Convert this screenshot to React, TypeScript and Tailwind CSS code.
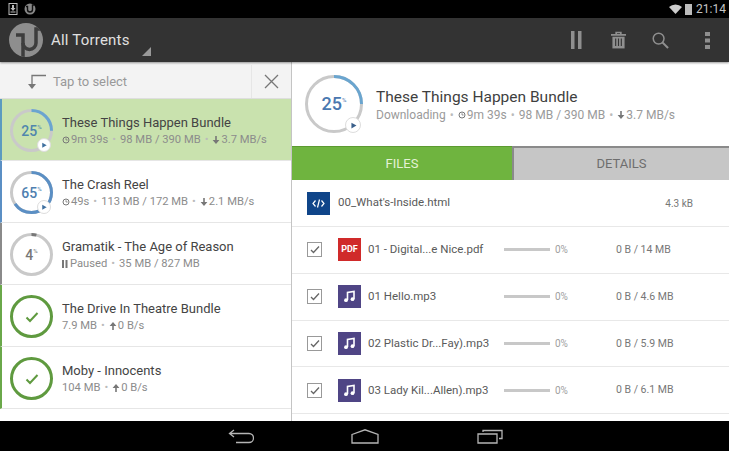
import React from "react";

const F = { fontFamily: "Roboto, 'Liberation Sans', sans-serif" };

function Ring({ pct, color, size, stroke, num, numClass, numColor }: { pct: number; color: string; size: number; stroke: number; num: string; numClass: string; numColor: string }) {
  const r = (size - stroke) / 2;
  const c = 2 * Math.PI * r;
  return (
    <div className="relative shrink-0" style={{ width: size, height: size }}>
      <svg width={size} height={size} className="absolute inset-0">
        <circle cx={size / 2} cy={size / 2} r={r} fill="none" stroke="#c9c9c9" strokeWidth={stroke} />
        <circle cx={size / 2} cy={size / 2} r={r} fill="none" stroke={color} strokeWidth={stroke} strokeDasharray={`${(c * pct) / 100} ${c}`} transform={`rotate(-90 ${size / 2} ${size / 2})`} />
      </svg>
      <div className="absolute inset-0 flex items-center justify-center">
        <span className={numClass} style={{ color: numColor }}>{num}</span>
        <span className="text-[6px] leading-none -mt-2" style={{ color: numColor }}>%</span>
      </div>
    </div>
  );
}

function Play({ size, color }: { size: number; color: string }) {
  return (
    <div className="absolute flex items-center justify-center rounded-full bg-white border border-[#dddddd]" style={{ width: size, height: size, right: size * 0.12, bottom: -size * 0.02 }}>
      <svg width={size * 0.45} height={size * 0.45} viewBox="0 0 10 10"><path d="M2 1l7 4-7 4z" fill={color} /></svg>
    </div>
  );
}

function Done() {
  return (
    <div className="w-[43px] h-[43px] rounded-full border-[3px] border-[#5f9a3f] flex items-center justify-center shrink-0">
      <svg width="14" height="12" viewBox="0 0 14 12"><path d="M1.500 6.500l3.500 3.500 7.500-8" fill="none" stroke="#5f9a3f" strokeWidth="2" /></svg>
    </div>
  );
}

const Clock = () => (
  <svg width="8" height="8" viewBox="0 0 8 8" className="inline-block mr-px"><circle cx="4" cy="4" r="3" fill="none" stroke="#777" strokeWidth="1" /><path d="M4 2.200V4h1.600" fill="none" stroke="#777" strokeWidth="0.8" /></svg>
);
const Down = () => (
  <svg width="8" height="8" viewBox="0 0 8 8" className="inline-block mr-px"><path d="M3.200 0h1.600v4H7.400L4 8 .6 4h2.600z" fill="#777" /></svg>
);
const Up = () => (
  <svg width="8" height="8" viewBox="0 0 8 8" className="inline-block mr-px"><path d="M3.200 8h1.600V4H7.400L4 0 .6 4h2.600z" fill="#777" /></svg>
);
const Dot = () => <span className="mx-[4px] text-[#bbbbbb]">•</span>;

function TorrentRow({ bg, bar, icon, title, sub }: { bg: string; bar: string; icon: React.ReactNode; title: string; sub: React.ReactNode }) {
  return (
    <div className={`h-[62px] flex items-center pl-[8px] pt-[2px] border-l-2 border-b border-b-[#e6e6e6] ${bg} ${bar}`}>
      <div className="relative w-[43px] h-[43px] shrink-0">{icon}</div>
      <div className="ml-[9px] min-w-0">
        <div className="text-[13px] leading-[18px] text-[#444444] whitespace-nowrap">{title}</div>
        <div className="text-[11.200px] leading-[15px] text-[#8c8c8c] whitespace-nowrap flex items-center">{sub}</div>
      </div>
    </div>
  );
}

function Check() {
  return (
    <div className="w-[15px] h-[15px] border border-[#999999] flex items-center justify-center shrink-0 bg-white">
      <svg width="10" height="9" viewBox="0 0 10 9"><path d="M1 5l2.500 2.500L9 1.500" fill="none" stroke="#666" strokeWidth="1.300" /></svg>
    </div>
  );
}

function Music() {
  return (
    <div className="w-[23px] h-[23px] bg-[#4f4585] flex items-center justify-center shrink-0">
      <svg width="13" height="13" viewBox="0 0 13 13"><path d="M4.500 10V2.500l6.500-1V9" fill="none" stroke="#fff" strokeWidth="1.600" /><circle cx="3" cy="10.200" r="1.900" fill="#fff" /><circle cx="9.500" cy="9.200" r="1.900" fill="#fff" /></svg>
    </div>
  );
}

function FileRow({ icon, name, size }: { icon: React.ReactNode; name: string; size: string }) {
  return (
    <div className="h-[46.750px] flex items-center pl-[15px] border-b border-[#e8e8e8] shrink-0">
      <Check />
      <div className="ml-[16px]">{icon}</div>
      <div className="ml-[7px] w-[136px] text-[11.500px] text-[#5a5a5a] whitespace-nowrap">{name}</div>
      <div className="w-[46px] h-[3px] bg-[#c8c8c8]" />
      <div className="ml-[5px] w-[61px] text-[10px] text-[#a0a0a0]">0%</div>
      <div className="text-[10.500px] text-[#777777] whitespace-nowrap">{size}</div>
    </div>
  );
}

export default function App() {
  return (
    <div className="w-[729px] h-[451px] overflow-hidden flex flex-col bg-white" style={F}>
      {/* status bar */}
      <div className="h-[18px] bg-black flex items-center pl-[8px] pr-[3px] shrink-0">
        <svg width="10" height="12" viewBox="0 0 10 12"><rect x="1" y="0.500" width="8" height="11" fill="none" stroke="#bbb" strokeWidth="1" /><path d="M4 2h2v3h1.500L5 8 2.500 5H4z" fill="#bbb" /><rect x="2.500" y="8.500" width="5" height="1" fill="#bbb" /></svg>
        <svg width="12" height="12" viewBox="0 0 12 12" className="ml-[6px]"><circle cx="6" cy="6" r="5.500" fill="#888" /><path d="M2 3.500h1.500v3a2.500 2.500 0 0 0 5 0V2H10" fill="none" stroke="#111" strokeWidth="1.400" /></svg>
        <div className="flex-1" />
        <svg width="13" height="10" viewBox="0 0 13 10"><path d="M0 3a9.500 9.500 0 0 1 13 0L6.500 10z" fill="#cccccc" /></svg>
        <div className="ml-[3px] w-[7px] h-[11px] bg-[#bbbbbb]" />
        <span className="ml-[4px] text-[12px] text-[#c4c4c4] leading-none">21:14</span>
      </div>

      {/* action bar */}
      <div className="h-[44px] bg-[#333333] flex items-center shrink-0 shadow-[0_1px_2px_rgba(0,0,0,0.4)] z-10">
        <div className="relative ml-[9px] w-[34px] h-[34px] rounded-full bg-[#8e8e8e] flex items-center justify-center overflow-hidden">
          <svg width="34" height="34" viewBox="0 0 34 34"><path d="M7 12h7v22" fill="none" stroke="#3d3d3d" strokeWidth="3.500" /><path d="M14 20a6.500 6.500 0 0 0 13 0V6h6" fill="none" stroke="#3d3d3d" strokeWidth="3.500" /></svg>
        </div>
        <span className="ml-[8px] text-[15px] text-[#e0e0e0] tracking-[0.2px]">All Torrents</span>
        <svg width="9" height="9" viewBox="0 0 9 9" className="ml-[12px] mt-[22px]"><path d="M9 0v9H0z" fill="#999" /></svg>
        <div className="flex-1" />
        <div className="flex items-center mr-[19px]">
          <svg width="11" height="18" viewBox="0 0 11 18"><rect x="0" y="0" width="3.500" height="18" fill="#8f8f8f" /><rect x="7" y="0" width="3.500" height="18" fill="#8f8f8f" /></svg>
          <svg width="15" height="18" viewBox="0 0 16 18" className="ml-[29px]"><path d="M0 3.500h16M5.500 3V1h5v2" fill="none" stroke="#8f8f8f" strokeWidth="1.800" /><path d="M1.500 5.500h13V18h-13z" fill="#8f8f8f" /><path d="M5 7.500v8M8 7.500v8M11 7.500v8" stroke="#333" strokeWidth="1.200" /></svg>
          <svg width="17" height="17" viewBox="0 0 18 18" className="ml-[26px]"><circle cx="7" cy="7" r="5.700" fill="none" stroke="#8f8f8f" strokeWidth="1.600" /><path d="M11 11l6 6" stroke="#8f8f8f" strokeWidth="2.200" /></svg>
          <svg width="5" height="17" viewBox="0 0 5 17" className="ml-[36px]"><rect x="0" y="0" width="5" height="4" fill="#8f8f8f" /><rect x="0" y="6.500" width="5" height="4" fill="#8f8f8f" /><rect x="0" y="13" width="5" height="4" fill="#8f8f8f" /></svg>
        </div>
      </div>

      {/* body */}
      <div className="flex-1 flex min-h-0">
        {/* left */}
        <div className="w-[292px] shrink-0 border-r border-[#c4c4c4] flex flex-col bg-white">
          <div className="h-[37px] bg-[#f3f3f3] flex items-center shrink-0 border-b border-[#dedede] pt-[3px]">
            <svg width="19" height="16" viewBox="0 0 19 16" className="ml-[27px]"><path d="M19 1.500H5v11" fill="none" stroke="#777" strokeWidth="1.300" /><path d="M1 10h8l-4 5z" fill="#777" /></svg>
            <span className="ml-[7px] text-[13px] text-[#999999]">Tap to select</span>
            <div className="flex-1" />
            <div className="w-[40px] h-full flex items-center justify-center border-l border-[#e6e6e6]">
              <svg width="15" height="15" viewBox="0 0 15 15"><path d="M1 1l13 13M14 1L1 14" stroke="#777" strokeWidth="1.300" /></svg>
            </div>
          </div>
          <TorrentRow
            bg="bg-[#c9e2ae]"
            bar="border-l-[#5b9bc0]"
            icon={<><Ring pct={25} color="#6aa5cf" size={43} stroke={3} num="25" numClass="text-[14px] font-medium leading-none" numColor="#4f86ad" /><Play size={14} color="#3f6f9f" /></>}
            title="These Things Happen Bundle"
            sub={<><Clock />9m 39s<Dot />98 MB / 390 MB<Dot /><Down />3.7 MB/s</>}
          />
          <TorrentRow
            bg="bg-white"
            bar="border-l-[#5b8fc4]"
            icon={<><Ring pct={65} color="#5b8fc4" size={43} stroke={3} num="65" numClass="text-[14px] font-medium leading-none" numColor="#4f7fb0" /><Play size={14} color="#3f6f9f" /></>}
            title="The Crash Reel"
            sub={<><Clock />49s<Dot />113 MB / 172 MB<Dot /><Down />2.1 MB/s</>}
          />
          <TorrentRow
            bg="bg-white"
            bar="border-l-[#8a8a8a]"
            icon={<Ring pct={4} color="#777777" size={43} stroke={3} num="4" numClass="text-[14px] font-medium leading-none" numColor="#777777" />}
            title="Gramatik - The Age of Reason"
            sub={<><svg width="6" height="8" viewBox="0 0 6 8" className="mr-[2px]"><rect width="2" height="8" fill="#777" /><rect x="3.500" width="2" height="8" fill="#777" /></svg>Paused<Dot />35 MB / 827 MB</>}
          />
          <TorrentRow
            bg="bg-white"
            bar="border-l-[#6aa84a]"
            icon={<Done />}
            title="The Drive In Theatre Bundle"
            sub={<>7.9 MB<Dot /><Up />0 B/s</>}
          />
          <TorrentRow
            bg="bg-white"
            bar="border-l-[#6aa84a]"
            icon={<Done />}
            title="Moby - Innocents"
            sub={<>104 MB<Dot /><Up />0 B/s</>}
          />
        </div>

        {/* right */}
        <div className="flex-1 min-w-0 flex flex-col overflow-hidden">
          <div className="h-[84px] flex items-center pl-[13px] shrink-0 bg-white">
            <div className="relative w-[58px] h-[58px] shrink-0">
              <Ring pct={25} color="#6aa5cf" size={58} stroke={3} num="25" numClass="text-[18px] font-medium leading-none" numColor="#4a78b0" />
              <Play size={16} color="#3a5f8a" />
            </div>
            <div className="ml-[13px] pt-[2px]">
              <div className="text-[15.500px] leading-[20px] text-[#3f3f3f] whitespace-nowrap">These Things Happen Bundle</div>
              <div className="text-[12px] leading-[16px] text-[#9a9a9a] whitespace-nowrap flex items-center">Downloading<Dot /><Clock />9m 39s<Dot />98 MB / 390 MB<Dot /><Down />3.7 MB/s</div>
            </div>
          </div>
          <div className="h-[34px] flex shrink-0 text-[13px]">
            <div className="w-[220px] bg-[#6fb43f] flex items-center justify-center text-[#e4f2d6] border-t border-[#5c9a30]">FILES</div>
            <div className="flex-1 bg-[#c6c6c6] flex items-center justify-center text-[#6e6e6e] border-t-2 border-t-[#8a8a8a] border-l-2 border-l-[#8a8a8a]">DETAILS</div>
          </div>
          <div className="flex flex-col flex-1 min-h-0">
            <div className="h-[47px] flex items-center pl-[15px] border-b border-[#e8e8e8] shrink-0">
              <div className="w-[23px] h-[23px] bg-[#0f4589] flex items-center justify-center shrink-0">
                <svg width="13" height="9" viewBox="0 0 13 9"><path d="M3.500 1.500L1 4.500l2.500 3M9.500 1.500l2.500 3-2.500 3M7.500 .5l-2 8" fill="none" stroke="#fff" strokeWidth="1.200" /></svg>
              </div>
              <div className="ml-[8px] text-[11.500px] text-[#5a5a5a] whitespace-nowrap">00_What's-Inside.html</div>
              <div className="flex-1" />
              <div className="mr-[36px] text-[10px] text-[#777777]">4.3 kB</div>
            </div>
            <FileRow icon={<div className="w-[23px] h-[23px] bg-[#d02a2a] flex items-center justify-center text-[9px] font-bold text-white">PDF</div>} name="01 - Digital...e Nice.pdf" size="0 B / 14 MB" />
            <FileRow icon={<Music />} name="01 Hello.mp3" size="0 B / 4.6 MB" />
            <FileRow icon={<Music />} name="02 Plastic Dr...Fay).mp3" size="0 B / 5.9 MB" />
            <FileRow icon={<Music />} name="03 Lady Kil...Allen).mp3" size="0 B / 6.1 MB" />
          </div>
        </div>
      </div>

      {/* nav bar */}
      <div className="h-[30px] bg-black flex items-center shrink-0">
        <svg width="26" height="15" viewBox="0 0 26 15" className="ml-[228px]"><path d="M6 1L1.500 4.500 6 8M2 4.500h19a3.500 3.500 0 0 1 0 9H8" fill="none" stroke="#b5b5b5" strokeWidth="1.300" /></svg>
        <svg width="28" height="15" viewBox="0 0 28 15" className="ml-[97px]"><path d="M1 5.500L14 .8 27 5.500V14H1z" fill="none" stroke="#b5b5b5" strokeWidth="1.300" /></svg>
        <svg width="26" height="15" viewBox="0 0 26 15" className="ml-[98px]"><path d="M1 5h19v9H1zM6 3V1.500h19v8h-3" fill="none" stroke="#b5b5b5" strokeWidth="1.300" /></svg>
      </div>
    </div>
  );
}
